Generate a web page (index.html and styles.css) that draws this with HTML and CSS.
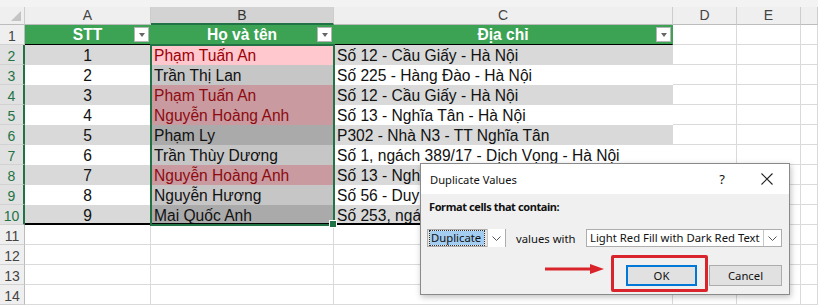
FILE: index.html
```html
<html lang="vi">
    <head>
        <title>Duplicate Values</title>
        <meta charset="UTF-8" />
        <link rel="stylesheet" href="styles.css">
    </head>

    <body>
        <div class="sheet">
            <div class="strip"></div>
            <div class="row cols">
                <div class="c corner"><span class="tri"></span></div>
                <div class="c">A</div>
                <div class="c sel">B</div>
                <div class="c">C</div>
                <div class="c">D</div>
                <div class="c">E</div>
                <div class="c"></div>
            </div>

            <div class="row">
                <div class="c rh">1</div>
                <div class="c th">STT<span class="filter"></span></div>
                <div class="c th">Họ và tên<span class="filter"></span></div>
                <div class="c th">Địa chỉ<span class="filter"></span></div>
                <div class="c"></div><div class="c"></div><div class="c"></div>
            </div>
            <div class="row">
                <div class="c rh on">2</div>
                <div class="c t band num">1</div>
                <div class="c t dup-active">Phạm Tuấn An</div>
                <div class="c t band">Số 12 - Cầu Giấy - Hà Nội</div>
                <div class="c"></div><div class="c"></div><div class="c"></div>
            </div>
            <div class="row">
                <div class="c rh on">3</div>
                <div class="c t num">2</div>
                <div class="c t sel-white">Trần Thị Lan</div>
                <div class="c t">Số 225 - Hàng Đào - Hà Nội</div>
                <div class="c"></div><div class="c"></div><div class="c"></div>
            </div>
            <div class="row">
                <div class="c rh on">4</div>
                <div class="c t band num">3</div>
                <div class="c t dup">Phạm Tuấn An</div>
                <div class="c t band">Số 12 - Cầu Giấy - Hà Nội</div>
                <div class="c"></div><div class="c"></div><div class="c"></div>
            </div>
            <div class="row">
                <div class="c rh on">5</div>
                <div class="c t num">4</div>
                <div class="c t dup">Nguyễn Hoàng Anh</div>
                <div class="c t">Số 13 - Nghĩa Tân - Hà Nội</div>
                <div class="c"></div><div class="c"></div><div class="c"></div>
            </div>
            <div class="row">
                <div class="c rh on">6</div>
                <div class="c t band num">5</div>
                <div class="c t sel-gray">Phạm Ly</div>
                <div class="c t band">P302 - Nhà N3 - TT Nghĩa Tân</div>
                <div class="c"></div><div class="c"></div><div class="c"></div>
            </div>
            <div class="row">
                <div class="c rh on">7</div>
                <div class="c t num">6</div>
                <div class="c t sel-white">Trần Thùy Dương</div>
                <div class="c t">Số 1, ngách 389/17 - Dịch Vọng - Hà Nội</div>
                <div class="c"></div><div class="c"></div><div class="c"></div>
            </div>
            <div class="row">
                <div class="c rh on">8</div>
                <div class="c t band num">7</div>
                <div class="c t dup">Nguyễn Hoàng Anh</div>
                <div class="c t band">Số 13 - Nghĩa Tân - Hà Nội</div>
                <div class="c"></div><div class="c"></div><div class="c"></div>
            </div>
            <div class="row">
                <div class="c rh on">9</div>
                <div class="c t num">8</div>
                <div class="c t sel-white">Nguyễn Hương</div>
                <div class="c t">Số 56 - Duy Tân - Hà Nội</div>
                <div class="c"></div><div class="c"></div><div class="c"></div>
            </div>
            <div class="row last">
                <div class="c rh on">10</div>
                <div class="c t band num">9</div>
                <div class="c t sel-gray">Mai Quốc Anh</div>
                <div class="c t band">Số 253, ngách 1 - Cầu Giấy - Hà Nội</div>
                <div class="c"></div><div class="c"></div><div class="c"></div>
            </div>
            <div class="row">
                <div class="c rh">11</div>
                <div class="c"></div><div class="c"></div><div class="c"></div>
                <div class="c"></div><div class="c"></div><div class="c"></div>
            </div>
            <div class="row">
                <div class="c rh">12</div>
                <div class="c"></div><div class="c"></div><div class="c"></div>
                <div class="c"></div><div class="c"></div><div class="c"></div>
            </div>
            <div class="row">
                <div class="c rh">13</div>
                <div class="c"></div><div class="c"></div><div class="c"></div>
                <div class="c"></div><div class="c"></div><div class="c"></div>
            </div>
            <div class="row">
                <div class="c rh">14</div>
                <div class="c"></div><div class="c"></div><div class="c"></div>
                <div class="c"></div><div class="c"></div><div class="c"></div>
            </div>

            <!-- selection B2:B10 -->
            <div class="selection"><span class="handle"></span></div>

            <div class="dialog">
                <div class="dlg-title">
                    <span class="dlg-name">Duplicate Values</span>
                    <span class="help">?</span>
                    <svg class="close" width="12" height="12" viewBox="0 0 12 12">
                        <path d="M0.5 0.5 L11.5 11.5 M11.5 0.5 L0.5 11.5" stroke="#222" stroke-width="1.1" fill="none" />
                    </svg>
                </div>
                <div class="dlg-body">
                    <div class="dlg-label">Format cells that contain:</div>
                    <div class="dlg-fields">
                        <div class="combo combo-type">
                            <span class="val focus">Duplicate</span>
                            <span class="arrow"><svg width="9" height="5" viewBox="0 0 9 5"><path d="M0.5 0.5 L4.5 4.5 L8.5 0.5" stroke="#555" fill="none" /></svg></span>
                        </div>
                        <span class="with">values with</span>
                        <div class="combo combo-format">
                            <span class="val">Light Red Fill with Dark Red Text</span>
                            <span class="arrow"><svg width="9" height="5" viewBox="0 0 9 5"><path d="M0.5 0.5 L4.5 4.5 L8.5 0.5" stroke="#555" fill="none" /></svg></span>
                        </div>
                    </div>
                    <div class="dlg-buttons">
                        <button class="btn btn-ok">OK</button>
                        <button class="btn">Cancel</button>
                    </div>
                </div>
            </div>

            <svg class="pointer" width="60" height="14" viewBox="0 0 60 14">
                <path d="M0 7 H47" stroke="#d9242b" stroke-width="3" />
                <polygon points="45,2 59,7 45,12" fill="#d9242b" />
            </svg>
            <div class="highlight"></div>
        </div>
    </body>
</html>
```

FILE: styles.css
```css
body {
    margin: 0;
    background: #fff;
    font-family: "Liberation Sans", Arial, sans-serif;
    overflow: hidden;
}

.sheet {
    position: relative;
    width: 818px;
    height: 308px;
}

.strip {
    height: 7px;
    background: #f3f3f3;
}

.row {
    display: grid;
    grid-template-columns: 25px 126px 183px 339px 64px 64px 1fr;
    height: 20px;
}

.c {
    box-sizing: border-box;
    border-right: 1px solid #dadada;
    border-bottom: 1px solid #dadada;
    overflow: hidden;
    white-space: nowrap;
    font-size: 15.6px;
    line-height: 18px;
    padding: 2px 0 0 3px;
    color: #111;
}

/* column letters */
.cols {
    height: 18px;
}

.cols .c {
    background: #efefef;
    border-right-color: #cdcdcd;
    border-bottom-color: #bcbcbc;
    font-size: 14px;
    line-height: 17px;
    color: #444;
    text-align: center;
    padding: 0;
}

.cols .sel {
    background: #d3d3d3;
    border-bottom: 2px solid #217346;
    color: #333;
}

.corner {
    position: relative;
}

.tri {
    position: absolute;
    right: 3px;
    bottom: 3px;
    width: 0;
    height: 0;
    border-left: 10px solid transparent;
    border-bottom: 10px solid #c4c4c4;
}

/* row numbers */
.rh {
    background: #efefef;
    border-right-color: #bcbcbc;
    border-bottom-color: #d2d2d2;
    font-size: 14px;
    line-height: 18px;
    color: #444;
    text-align: center;
    padding: 2px 0 0 0;
}

.rh.on {
    background: #e1e1e1;
    color: #217346;
    border-right: 2px solid #217346;
}

/* table */
.th {
    position: relative;
    background: #3ca254;
    border-right-color: #3ca254;
    border-bottom: 1px solid #000;
    color: #fff;
    font-weight: bold;
    text-align: center;
    line-height: 18px;
    padding: 1px 0 0 0;
}

.filter {
    position: absolute;
    right: 1px;
    top: 2px;
    width: 15px;
    height: 15px;
    box-sizing: border-box;
    background: #fff;
    border: 1px solid #b5b5b5;
}

.filter::after {
    content: "";
    position: absolute;
    left: 4px;
    top: 5px;
    border-left: 3px solid transparent;
    border-right: 3px solid transparent;
    border-top: 4px solid #666;
}

.t {
    border-color: transparent;
    background: #fff;
}

.band {
    background: #d9d9d9;
}

.num {
    text-align: center;
    padding-left: 0;
}

.last .t {
    border-bottom: 2px solid #000;
}

.dup-active {
    background: #ffc7ce;
    color: #9c0006;
}

.dup {
    background: #c99aa0;
    color: #8e0a10;
}

.sel-white {
    background: #c6c6c6;
}

.sel-gray {
    background: #aaaaaa;
}

.selection {
    position: absolute;
    left: 150px;
    top: 44px;
    width: 185px;
    height: 182px;
    box-sizing: border-box;
    border: 2px solid #217346;
}

.handle {
    position: absolute;
    right: -4px;
    bottom: -4px;
    width: 6px;
    height: 6px;
    background: #217346;
    border: 1px solid #fff;
}

/* dialog */
.dialog {
    position: absolute;
    left: 420px;
    top: 163px;
    width: 370px;
    height: 132px;
    box-sizing: border-box;
    border: 1px solid #8a8a8a;
    background: #f0f0f0;
    box-shadow: 1px 2px 6px rgba(0, 0, 0, 0.25);
    font-family: "Noto Sans", sans-serif;
    font-size: 11.3px;
    color: #111;
}

.dlg-title {
    display: flex;
    align-items: center;
    height: 30px;
    background: #fff;
    padding-left: 9px;
}

.dlg-name {
    flex: 1;
    font-size: 11.2px;
}

.help {
    font-size: 13px;
    margin-right: 36px;
}

.close {
    margin-right: 16px;
}

.dlg-body {
    padding: 5px 7px 0 6px;
}

.dlg-label {
    font-weight: bold;
    font-size: 11px;
    letter-spacing: -0.4px;
    line-height: 16px;
    padding-left: 2px;
}

.dlg-fields {
    display: flex;
    align-items: center;
    margin-top: 14px;
    height: 18px;
}

.combo {
    display: flex;
    height: 18px;
    box-sizing: border-box;
    border: 1px solid #adadad;
}

.combo-type {
    width: 79px;
    background: #e5e5e5;
    padding: 1px 0 1px 2px;
}

.combo-format {
    width: 196px;
    margin-left: auto;
    background: #fff;
}

.val {
    flex: 1;
    line-height: 15px;
    padding-left: 3px;
    overflow: hidden;
    white-space: nowrap;
}

.focus {
    flex: none;
    width: 54px;
    padding-left: 1px;
    box-sizing: border-box;
    background: #a3cdf1;
    outline: 1px dotted #333;
    line-height: 14px;
}

.arrow {
    display: flex;
    align-items: center;
    justify-content: center;
    width: 18px;
    box-sizing: border-box;
    border-left: 1px solid #c8c8c8;
    background: #fff;
}

.combo-type .arrow {
    margin: -2px 0 -2px auto;
}

.with {
    margin-left: 10px;
}

.dlg-buttons {
    display: flex;
    justify-content: flex-end;
    gap: 12px;
    margin-top: 18px;
}

.btn {
    height: 21px;
    width: 73px;
    box-sizing: border-box;
    background: #e1e1e1;
    border: 1px solid #adadad;
    font-family: "Noto Sans", sans-serif;
    font-size: 11.3px;
    color: #111;
    padding: 0;
}

.btn-ok {
    width: 71px;
    border: 2px solid #0078d7;
}

.pointer {
    position: absolute;
    left: 545px;
    top: 262px;
}

.highlight {
    position: absolute;
    left: 611px;
    top: 255px;
    width: 97px;
    height: 37px;
    box-sizing: border-box;
    border: 3px solid #d9242b;
    border-radius: 2px;
}
```
